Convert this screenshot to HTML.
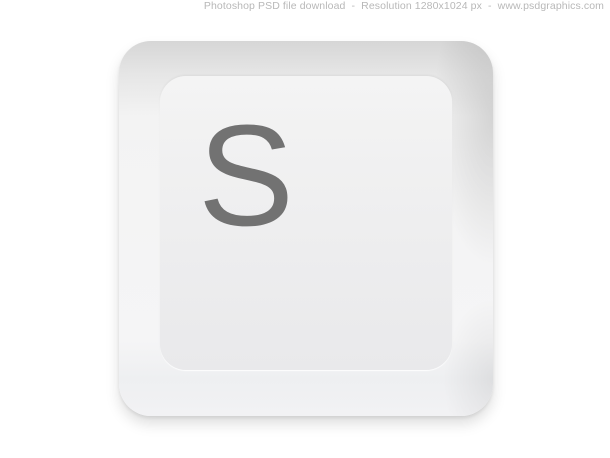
<!DOCTYPE html>
<html><head><style>
body{margin:0;width:610px;height:458px;background:#fff;position:relative;overflow:hidden;font-family:"Liberation Sans",sans-serif}
.hdr{position:absolute;top:0;right:6px;font-size:10.5px;color:#b8b8b8;white-space:nowrap;letter-spacing:0.1px}
.key{position:absolute;left:119px;top:41px;width:374px;height:375px;border-radius:32px;
background:
radial-gradient(ellipse 60px 150px at 100% 20%,rgba(0,0,0,0.13),rgba(0,0,0,0) 100%),
radial-gradient(ellipse 50px 80px at 100% 90%,rgba(0,0,0,0.07),rgba(0,0,0,0) 100%),
linear-gradient(180deg,#d6d6d6 0%,#e6e6e6 9%,#f3f3f3 20%,#f5f5f6 80%,#eeeff1 90%,#f2f2f4 100%);
box-shadow:0 8px 14px rgba(0,0,0,0.13),0 2px 3px rgba(0,0,0,0.08)}
.face{position:absolute;left:41px;top:35px;width:292px;height:294px;border-radius:26px;
background:linear-gradient(180deg,#f4f4f4 0%,#eeeeef 50%,#e9e9eb 100%);
box-shadow:0 1px 1px rgba(255,255,255,0.9),0 -1px 2px rgba(0,0,0,0.05)}
.s{position:absolute;left:38px;top:28px;font-size:144px;line-height:144px;color:#727272}
</style></head><body>
<div class="hdr">Photoshop PSD file download &nbsp;- &nbsp;Resolution 1280x1024 px &nbsp;- &nbsp;www.psdgraphics.com</div>
<div class="key"><div class="face"><div class="s">S</div></div></div>
</body></html>
